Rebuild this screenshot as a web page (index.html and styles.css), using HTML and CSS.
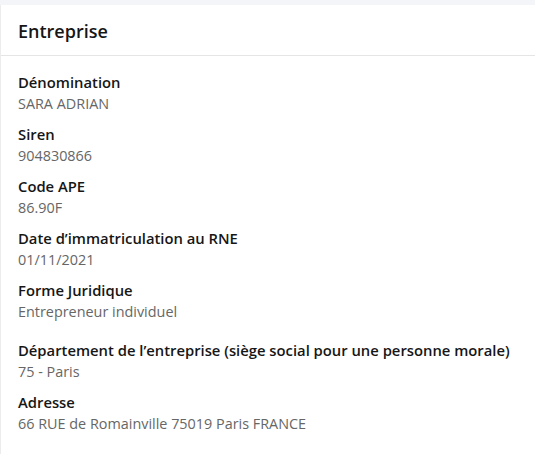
FILE: index.html
```html
<!DOCTYPE html>
<html lang="fr">
<head>
  <meta charset="UTF-8" />
  <meta name="viewport" content="width=device-width, initial-scale=1.0" />
  <title>Entreprise</title>
  <link rel="stylesheet" href="styles.css">
</head>
<body>
  <div class="card">
    <div class="card-header">Entreprise</div>
    <div class="card-body">
      <div class="field">
        <div class="label">Dénomination</div>
        <div class="value">SARA ADRIAN</div>
      </div>
      <div class="field">
        <div class="label">Siren</div>
        <div class="value">904830866</div>
      </div>
      <div class="field">
        <div class="label">Code APE</div>
        <div class="value">86.90F</div>
      </div>
      <div class="field">
        <div class="label">Date d’immatriculation au RNE</div>
        <div class="value">01/11/2021</div>
      </div>
      <div class="field spaced">
        <div class="label">Forme Juridique</div>
        <div class="value">Entrepreneur individuel</div>
      </div>
      <div class="field">
        <div class="label">Département de l’entreprise (siège social pour une personne morale)</div>
        <div class="value">75 - Paris</div>
      </div>
      <div class="field">
        <div class="label">Adresse</div>
        <div class="value">66 RUE de Romainville 75019 Paris FRANCE</div>
      </div>
    </div>
  </div>
</body>
</html>
```

FILE: styles.css
```css
body {
  margin: 0;
  padding: 5px 0 0 0;
  background: #f3f5f8;
  font-family: 'Open Sans', 'Noto Sans', sans-serif;
  color: #161616;
}
.card {
  background: #fff;
  border-left: 1px solid #ececec;
  min-height: 449px;
  box-sizing: border-box;
}
.card-header {
  padding: 15px 17px 13px 17px;
  font-size: 18px;
  font-weight: 600;
  line-height: 22px;
  border-bottom: 1px solid #e5e5e5;
}
.card-body {
  padding: 15px 17px 0 17px;
}
.field {
  margin-bottom: 8px;
}
.field.spaced {
  margin-bottom: 16px;
}
.label {
  font-size: 14.8px;
  font-weight: 600;
  line-height: 22px;
}
.value {
  font-size: 14.4px;
  line-height: 22px;
  color: #666;
}
```
